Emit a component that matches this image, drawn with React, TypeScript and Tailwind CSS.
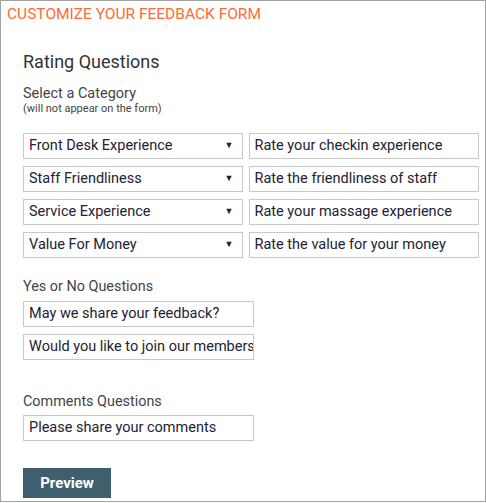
import React from "react";

const ratings = [
  { category: "Front Desk Experience", question: "Rate your checkin experience" },
  { category: "Staff Friendliness", question: "Rate the friendliness of staff" },
  { category: "Service Experience", question: "Rate your massage experience" },
  { category: "Value For Money", question: "Rate the value for your money" },
];

const yesNo = ["May we share your feedback?", "Would you like to join our membership program?"];

function Box({ children, className = "" }: { children: React.ReactNode; className?: string }) {
  return (
    <div
      className={`h-[26px] border border-[#c8c8c8] bg-white flex items-center px-[5px] overflow-hidden whitespace-nowrap text-[14.5px] text-[#222235] ${className}`}
    >
      {children}
    </div>
  );
}

export default function App() {
  return (
    <div
      className="w-[486px] h-[502px] border border-[#a3a3a3] bg-white flex flex-col"
      style={{ fontFamily: "Roboto, 'Noto Sans', sans-serif" }}
    >
      <div className="pl-[6px] pt-[4px] text-[15.5px] leading-[18px] text-[#ff6b35]">
        CUSTOMIZE YOUR FEEDBACK FORM
      </div>

      <div className="pl-[22px] pr-[6px] pt-[28px] flex flex-col">
        <h2 className="text-[18px] leading-[22px] text-[#333]">Rating Questions</h2>

        <div className="mt-[12px] text-[14.5px] leading-[17px] text-[#444]">Select a Category</div>
        <div className="text-[11px] leading-[13px] text-[#444]">(will not appear on the form)</div>

        <div className="mt-[18px] flex flex-col gap-[7px]">
          {ratings.map((r) => (
            <div key={r.category} className="flex gap-[6px]">
              <Box className="w-[220px] justify-between text-[#333]">
                <span>{r.category}</span>
                <span className="text-[9px] text-[#222] pr-[3px]">▼</span>
              </Box>
              <Box className="w-[231px]">{r.question}</Box>
            </div>
          ))}
        </div>

        <div className="mt-[20px] text-[14.4px] leading-[17px] text-[#444]">Yes or No Questions</div>
        <div className="mt-[6px] flex flex-col gap-[7px]">
          {yesNo.map((q) => (
            <Box key={q} className="w-[231px]">
              {q}
            </Box>
          ))}
        </div>

        <div className="mt-[33px] text-[14.4px] leading-[17px] text-[#444]">Comments Questions</div>
        <div className="mt-[5px]">
          <Box className="w-[231px]">Please share your comments</Box>
        </div>

        <button className="mt-[27px] w-[88px] h-[30px] bg-[#405f6e] text-white font-bold text-[15px]">
          Preview
        </button>
      </div>
    </div>
  );
}
